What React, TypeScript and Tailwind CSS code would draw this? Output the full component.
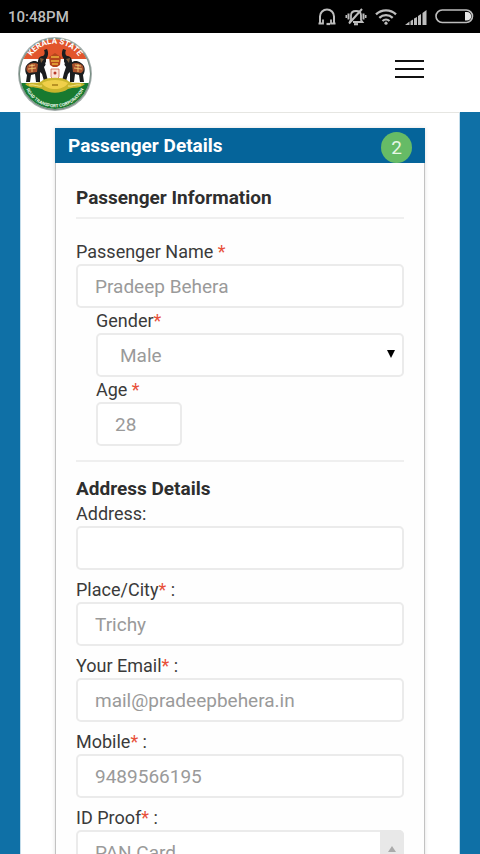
import type { InputHTMLAttributes, ReactNode } from "react";

const fieldBox =
  "block h-11 w-full rounded-[5px] border-2 border-[#ebebeb] bg-white text-[19px] text-[#9a9a9a] outline-none focus:border-[#9cc8e4]";

function Star() {
  return <span className="text-[#e8503a]">*</span>;
}

function Label({ htmlFor, children }: { htmlFor: string; children: ReactNode }) {
  return (
    <label htmlFor={htmlFor} className="block text-lg leading-[25px]">
      {children}
    </label>
  );
}

type FieldProps = InputHTMLAttributes<HTMLInputElement> & { id: string; label: ReactNode };

function Field({ id, label, ...rest }: FieldProps) {
  return (
    <div>
      <Label htmlFor={id}>{label}</Label>
      <input id={id} className={`${fieldBox} px-[17px]`} {...rest} />
    </div>
  );
}

function StatusBar() {
  return (
    <div className="flex h-[33px] shrink-0 items-center justify-between bg-black pr-[6px] pl-2 text-[#bdbdbd]">
      <span className="pt-[2px] text-[15px] font-medium">10:48PM</span>
      <div className="flex items-center gap-2">
        <svg width="20" height="18" viewBox="0 0 20 18" fill="none" stroke="currentColor" strokeWidth="2">
          <path d="M3 15V8.500A7 7 0 0 1 17 8.500V15" />
          <path d="M1.500 15.500H6V11.500M18.500 15.500H14V11.500" strokeWidth="1.800" />
          <path d="M13 16H9.500" strokeWidth="2.200" />
        </svg>
        <svg width="22" height="18" viewBox="0 0 22 18" fill="none" stroke="currentColor" strokeWidth="1.800">
          <path d="M6 12V7.500C6 4.500 8 3 11 3S16 4.500 16 7.500V12L17.500 14H8" />
          <path d="M4.500 14L6 12" />
          <path d="M9 16.200H13" strokeWidth="2.200" />
          <path d="M3.500 5.500V11.500M18.500 5.500V11.500" strokeWidth="2" />
          <path d="M1.300 7V10M20.700 7V10" strokeWidth="1.600" />
          <path d="M17 1L4 15.500" strokeWidth="2" />
        </svg>
        <svg width="22" height="17" viewBox="0 0 22 17" fill="none" stroke="currentColor" strokeWidth="2.300">
          <path d="M1 6.300A14.500 14.500 0 0 1 21 6.300" />
          <path d="M4.300 9.800A9.800 9.800 0 0 1 17.700 9.800" />
          <path d="M7.500 13A5.200 5.200 0 0 1 14.500 13" />
          <circle cx="11" cy="15.200" r="1.600" fill="currentColor" stroke="none" />
        </svg>
        <svg width="22" height="16" viewBox="0 0 22 16" fill="currentColor">
          <path d="M0 16L4.500 12.500V16ZM5.500 12L8 10.500V16H5.500ZM9 9.500L12 8V16H9ZM13 7L16 5V16H13ZM17.500 4L21.500 1V16H17.500Z" />
        </svg>
        <svg width="39" height="15" viewBox="0 0 39 15">
          <rect x="1" y="1" width="36.500" height="12.500" rx="6.200" fill="none" stroke="currentColor" strokeWidth="1.600" />
          <path d="M30 3H32A4.200 4.200 0 0 1 32 11.500H30Z" fill="#e6e6e6" />
        </svg>
      </div>
    </div>
  );
}

function Elephant() {
  return (
    <g>
      <path
        d="M8 45L9 38C6 34 7 28 11 26C15 23 18 24 20 25C20 21 22 19 25 19C27 18 27 15 26 13L29 12C31 16 30 20 28 22C28 26 28 28 26 30L28 36L30 44H26L24 37L22 35V45H18L17 37L13 38L12 45Z"
        fill="#1b1d1f"
      />
      <path d="M9 29C11 26 17 25 20 27L19 35L11 36C8 34 8 32 9 29Z" fill="#a8502c" />
      <path d="M11 29L17 28M10 32L18 31M14 27V35" stroke="#ecc070" strokeWidth="1" />
      <path d="M22 21L26 22L23 26Z" fill="#7a5a3a" />
      <path d="M27 26C29 27 31 26 31 24" fill="none" stroke="#fff" strokeWidth="1" />
    </g>
  );
}

function Logo() {
  return (
    <svg width="74" height="74" viewBox="0 0 74 74" role="img" aria-label="Kerala State Road Transport Corporation">
      <defs>
        <clipPath id="disc">
          <circle cx="37" cy="37" r="35" />
        </clipPath>
        <path id="topArc" d="M10 26A28.500 28.500 0 0 1 64 26" />
        <path id="bottomArc" d="M6.500 48A32 32 0 0 0 67.500 48" />
      </defs>
      <circle cx="37" cy="37" r="37" fill="#a3adab" />
      <g clipPath="url(#disc)">
        <rect width="74" height="74" fill="#fff" />
        <rect width="74" height="22" fill="#e2552c" />
        <rect y="46" width="74" height="28" fill="#187a30" />
        <Elephant />
        <g transform="matrix(-1 0 0 1 74 0)">
          <Elephant />
        </g>
        <path d="M31 20L34 18L37 16L40 18L43 20L42 28L39 30H35L32 28Z" fill="#b5461c" />
        <path d="M33 20H41M33 24H41M34 27H40" stroke="#ecb43c" strokeWidth="1.500" />
        <path d="M33 32H41V40L37 44L33 40Z" fill="#fbe3d8" stroke="#cf6b52" strokeWidth="0.800" />
        <circle cx="37" cy="36" r="1.500" fill="#b93a2b" />
        <path d="M7 47C15 44 20 48 25 43C31 40 43 40 49 43C54 48 59 44 67 47C62 52 55 50 50 52C43 57 31 57 24 52C19 50 12 52 7 47Z" fill="#c9b52c" />
        <path d="M24 46C31 42 43 42 50 46C45 54 29 54 24 46Z" fill="#f0cf4a" />
        <path d="M11 48C17 47 20 50 24 49M63 48C57 47 54 50 50 49" fill="none" stroke="#f3e58c" strokeWidth="1" />
        <path d="M34 48H40" stroke="#a47d1a" strokeWidth="1.500" />
      </g>
      <circle cx="37" cy="37" r="35.500" fill="none" stroke="#456b55" strokeOpacity="0.500" strokeWidth="1" />
      <text fill="#fff" fontFamily="Roboto, sans-serif" fontSize="8" fontWeight="700" textAnchor="middle">
        <textPath href="#topArc" startOffset="50%">KERALA STATE</textPath>
      </text>
      <text fill="#f2faf0" fontFamily="Roboto, sans-serif" fontSize="4.5" fontWeight="700" textAnchor="middle">
        <textPath href="#bottomArc" startOffset="50%">ROAD TRANSPORT CORPORATION</textPath>
      </text>
    </svg>
  );
}

export default function App() {
  return (
    <div className="flex h-screen flex-col overflow-hidden bg-[#0f70a6] font-[Roboto,sans-serif] text-[#3a3a3a]">
      <StatusBar />
      <header className="flex h-[79px] shrink-0 items-center justify-between bg-white pr-14 pl-[18px]">
        <a href="#" className="block pt-[2px]">
          <Logo />
        </a>
        <button type="button" aria-label="Menu" className="flex flex-col gap-[6px] pb-2">
          <span className="h-[2px] w-[29px] bg-[#111]" />
          <span className="h-[2px] w-[29px] bg-[#111]" />
          <span className="h-[2px] w-[29px] bg-[#111]" />
        </button>
      </header>

      <main className="mx-5 flex-1 overflow-y-auto border-x border-t border-x-[#c3dcea] border-t-[#e6e6e2] bg-white px-[34px] pt-[15px] [scrollbar-width:none]">
        <form className="border-x border-[#c2c2c2] bg-[#fefefe] shadow-[0_0_4px_#e0e0e0]">
          <div className="-mx-px flex h-[35px] items-center justify-between bg-[#05649a] px-[13px] text-white">
            <h1 className="pt-[2px] text-[19px] font-bold">Passenger Details</h1>
            <span className="mt-1 flex size-[31px] items-center justify-center rounded-full bg-[#66bb66] pt-[2px] text-[19px] text-[#e6f7e6]">
              2
            </span>
          </div>

          <div className="px-5 pt-[22px] pb-10">
            <h2 className="text-[19px] leading-[25px] font-bold text-[#2e2e2e]">Passenger Information</h2>
            <hr className="mt-[7px] mb-5 border-t-2 border-[#efefef]" />
            <Field id="name" label={<>Passenger Name <Star /></>} defaultValue="Pradeep Behera" />
            <div className="pl-5">
              <Label htmlFor="gender">Gender<Star /></Label>
              <div className="relative">
                <select id="gender" className={`${fieldBox} appearance-none px-[22px] pt-[2px]`}>
                  <option>Male</option>
                  <option>Female</option>
                </select>
                <svg className="pointer-events-none absolute top-[17px] right-[9px]" width="8" height="8" viewBox="0 0 8 8">
                  <path d="M0 0H8L4 8Z" fill="#000" />
                </svg>
              </div>
              <div className="w-[86px]">
                <Field id="age" label={<>Age <Star /></>} inputMode="numeric" defaultValue="28" />
              </div>
            </div>
            <hr className="mt-[14px] mb-[14px] border-t-2 border-[#efefef]" />

            <h2 className="text-[19px] leading-[25px] font-bold text-[#2e2e2e]">Address Details</h2>
            <div className="flex flex-col gap-[7px]">
              <Field id="address" label="Address:" />
              <Field id="city" label={<>Place/City<Star /> :</>} defaultValue="Trichy" />
              <Field id="email" type="email" label={<>Your Email<Star /> :</>} defaultValue="mail@pradeepbehera.in" />
              <Field id="mobile" type="tel" label={<>Mobile<Star /> :</>} defaultValue="9489566195" />
              <div>
                <Label htmlFor="proof">ID Proof<Star /> :</Label>
                <div className="relative">
                  <select id="proof" className={`${fieldBox} appearance-none px-[17px] pt-[2px]`}>
                    <option>PAN Card</option>
                    <option>Passport</option>
                    <option>Driving Licence</option>
                  </select>
                  <div className="pointer-events-none absolute inset-y-0 right-0 flex w-6 justify-center rounded-r-[5px] bg-[#e8e8e8] pt-4">
                    <svg width="8" height="6" viewBox="0 0 8 6">
                      <path d="M4 0L8 6H0Z" fill="#aaa" />
                    </svg>
                  </div>
                </div>
              </div>
            </div>
          </div>
        </form>
      </main>
    </div>
  );
}
